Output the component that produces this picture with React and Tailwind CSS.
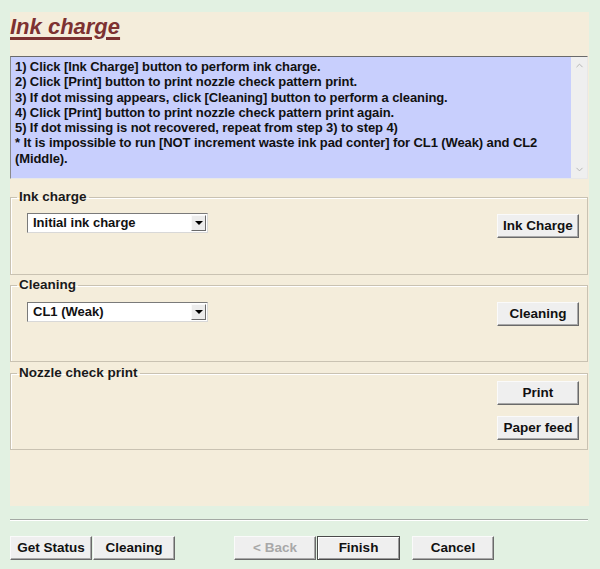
import { ChevronUp, ChevronDown } from "lucide-react";

const font = { fontFamily: '"Liberation Sans", Arial, sans-serif' };

const steps = [
  "1) Click [Ink Charge] button to perform ink charge.",
  "2) Click [Print] button to print nozzle check pattern print.",
  "3) If dot missing appears, click [Cleaning] button to perform a cleaning.",
  "4) Click [Print] button to print nozzle check pattern print again.",
  "5) If dot missing is not recovered, repeat from step 3) to step 4)",
  "* It is impossible to run [NOT increment waste ink pad conter] for CL1 (Weak) and CL2 (Middle).",
];

const Button = ({ children, className = "", disabled, isDefault }) => (
  <button
    className={
      "h-[24px] w-[82px] bg-[#efefef] text-[13.5px] font-bold leading-none " +
      (disabled ? "text-[#a8a8a8] " : "text-[#111] ") +
      (isDefault
        ? "border border-[#4a4a4a] shadow-[inset_1px_1px_0_#fff,inset_-1px_-1px_0_#9a9a9a] "
        : "border border-t-[#fafafa] border-l-[#fafafa] border-r-[#6a6a6a] border-b-[#6a6a6a] shadow-[inset_-1px_-1px_0_#a8a8a8] ") +
      className
    }
  >
    {children}
  </button>
);

const Select = ({ value, className = "" }) => (
  <div
    className={
      "flex h-[20px] w-[181px] items-stretch border border-t-[#7a7a7a] border-l-[#7a7a7a] border-r-[#d8d8d8] border-b-[#d8d8d8] bg-white " +
      className
    }
  >
    <div className="flex-1 pl-[5px] text-[13px] font-bold leading-[18px] text-[#111]">
      {value}
    </div>
    <div className="m-px flex w-[15px] items-center justify-center border border-t-[#fafafa] border-l-[#fafafa] border-r-[#6a6a6a] border-b-[#6a6a6a] bg-[#ececec]">
      <span className="h-0 w-0 border-x-[4px] border-t-[4px] border-x-transparent border-t-black" />
    </div>
  </div>
);

const Group = ({ title, className = "", children }) => (
  <fieldset
    className={
      "border border-[#c9c2b2] shadow-[inset_1px_1px_0_#fff] " + className
    }
  >
    <legend className="ml-[6px] px-[2px] text-[13.5px] font-bold leading-[14px] text-[#1a1a1a]">
      {title}
    </legend>
    {children}
  </fieldset>
);

export default function App() {
  return (
    <div className="h-[569px] w-[600px] overflow-hidden bg-[#e2f1e2] pt-[12px]" style={font}>
      <div className="ml-[10px] h-[494px] w-[579px] bg-[#f4eddb]">
        <h1 className="h-[44px] pt-[2px] text-[22px] font-bold italic leading-[26px] text-[#7d3131] underline decoration-[3px] underline-offset-[3px]">
          Ink charge
        </h1>

        <div className="flex h-[123px] w-[578px] border border-t-[#6a6a6a] border-l-[#8a8a8a] border-r-[#e8e8e8] border-b-[#e8e8e8] bg-[#c8cffd]">
          <div className="flex-1 pl-[4px] pt-[2px] pr-[10px] text-[13px] font-bold leading-[15.3px] tracking-[-0.1px] text-[#111]">
            {steps.map((s, i) => (
              <div key={i}>{s}</div>
            ))}
          </div>
          <div className="flex w-[16px] flex-col items-center justify-between bg-[#efefef] py-[3px] text-[#b0b0b0]">
            <ChevronUp size={11} strokeWidth={2} />
            <ChevronDown size={11} strokeWidth={2} />
          </div>
        </div>

        <Group title="Ink charge" className="mt-[11px] h-[85px] w-[578px]">
          <div className="flex items-start justify-between pl-[16px] pr-[8px]">
            <Select value="Initial ink charge" className="mt-[9px]" />
            <Button className="mt-[10px]">Ink Charge</Button>
          </div>
        </Group>

        <Group title="Cleaning" className="mt-[3px] h-[84px] w-[578px]">
          <div className="flex items-start justify-between pl-[16px] pr-[8px]">
            <Select value="CL1 (Weak)" className="mt-[10px]" />
            <Button className="mt-[10px]">Cleaning</Button>
          </div>
        </Group>

        <Group title="Nozzle check print" className="mt-[4px] h-[84px] w-[578px]">
          <div className="flex flex-col items-end gap-[11px] pr-[8px]">
            <Button className="mt-[1px]">Print</Button>
            <Button>Paper feed</Button>
          </div>
        </Group>
      </div>

      <div className="ml-[10px] mt-[13px] h-px w-[578px] bg-[#a4a9a4] shadow-[0_1px_0_#fff]" />

      <div className="ml-[10px] mt-[16px] flex w-[578px] items-center">
        <Button>Get Status</Button>
        <Button className="ml-px">Cleaning</Button>
        <Button disabled className="ml-[59px]">&lt; Back</Button>
        <Button isDefault className="ml-px w-[83px]">Finish</Button>
        <Button className="ml-[12px]">Cancel</Button>
      </div>
    </div>
  );
}
